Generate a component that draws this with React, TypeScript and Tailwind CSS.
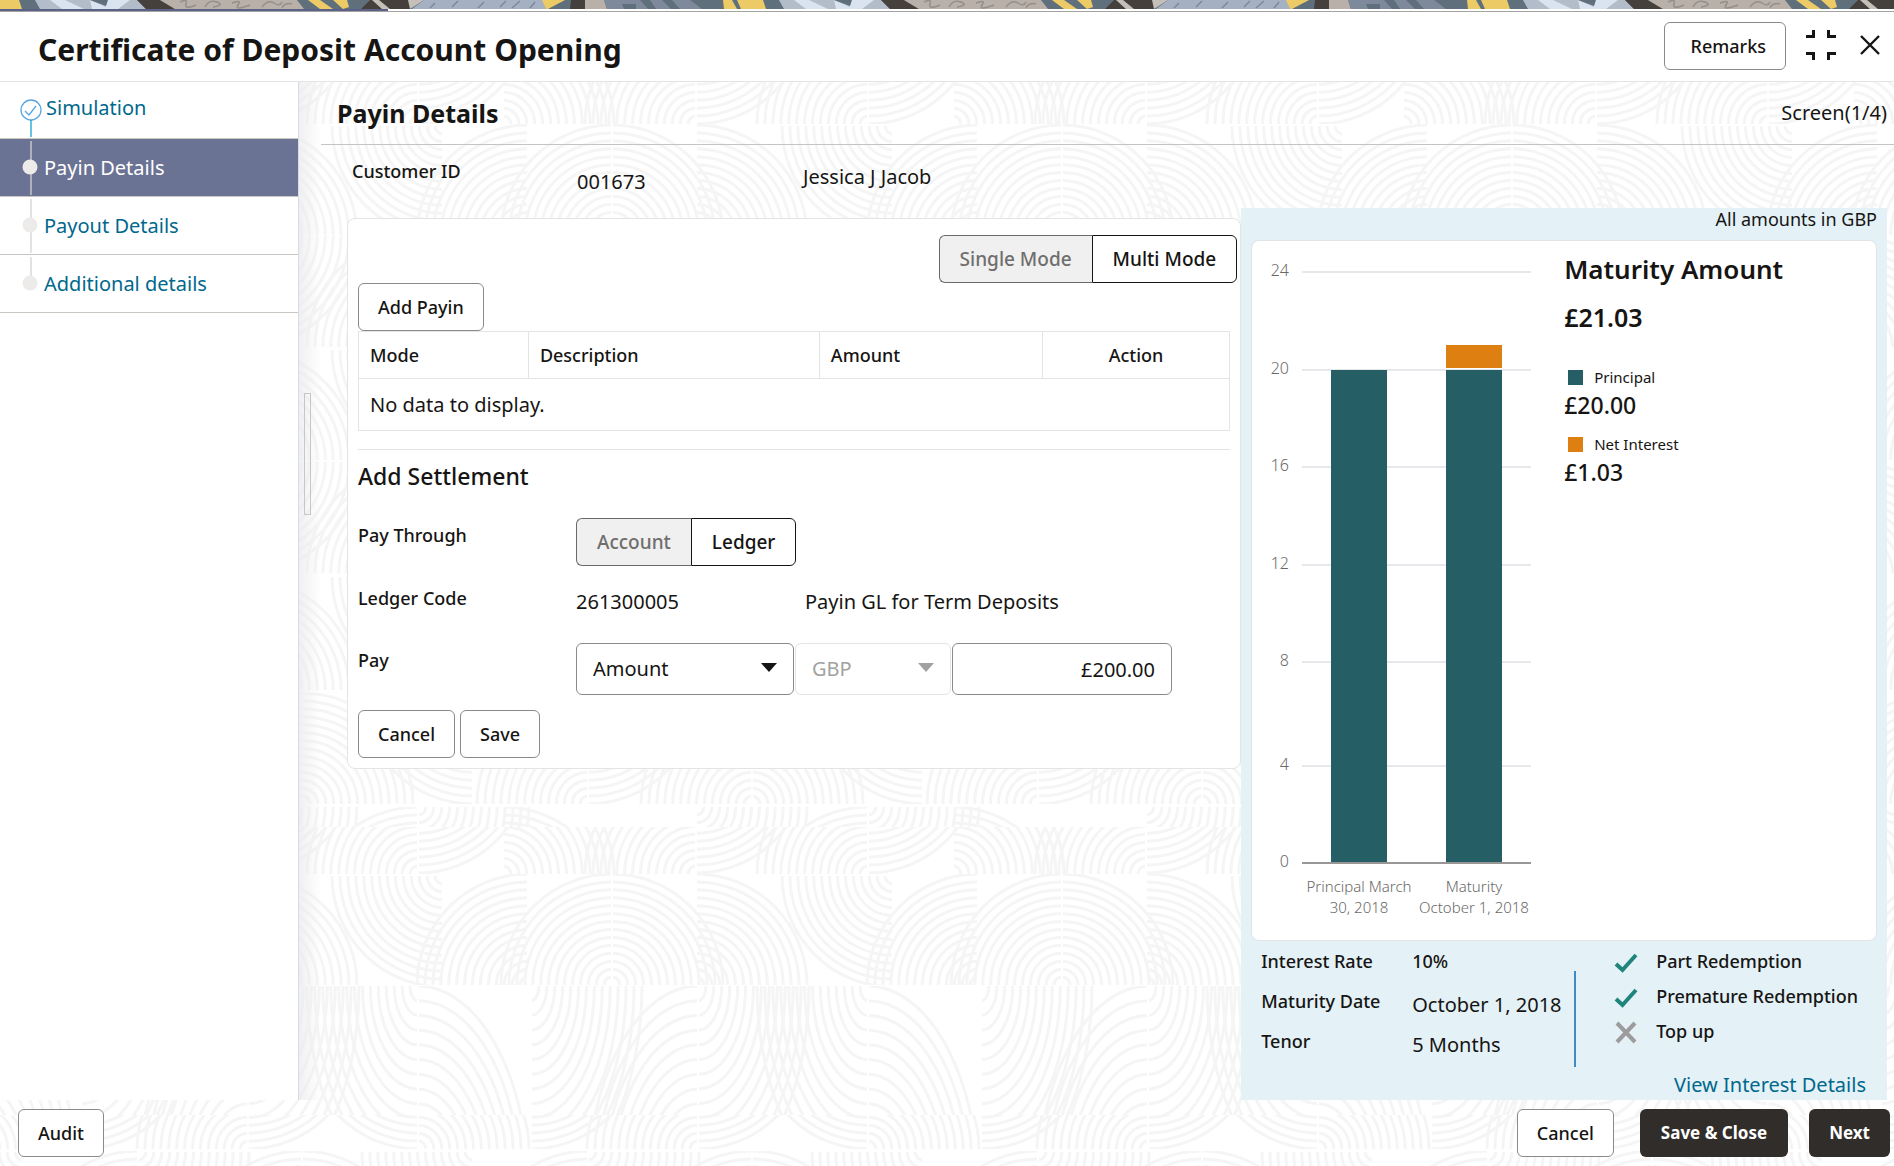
import { useState } from 'react'
import type { ReactNode } from 'react'
import { clsx } from 'clsx'

type Fan = { cx: number; side: 1 | -1; dir: 'up' | 'down' }
type Band = { top: number; bottom: number; base: number; hang: number; ry: number; fans: Fan[] }

const PERIOD = 450
const RADIUS = 111

const domes: Fan[] = [
  { cx: 612, side: 1, dir: 'up' },
  { cx: 612, side: -1, dir: 'up' },
  { cx: 696, side: 1, dir: 'up' },
  { cx: 528, side: -1, dir: 'up' },
  { cx: 443, side: -1, dir: 'down' },
]

const waves: Fan[] = [
  { cx: 418, side: -1, dir: 'up' },
  { cx: 418, side: 1, dir: 'down' },
  { cx: 503, side: 1, dir: 'up' },
  { cx: 696, side: -1, dir: 'up' },
  { cx: 696, side: 1, dir: 'down' },
]

const rings: Fan[] = [
  { cx: 302, side: 1, dir: 'up' },
  { cx: 302, side: -1, dir: 'up' },
  { cx: 473, side: -1, dir: 'down' },
  { cx: 588, side: -1, dir: 'up' },
  { cx: 588, side: 1, dir: 'down' },
]

const bands: Band[] = [
  { top: 70, bottom: 124, base: 124, hang: 13, ry: 111, fans: waves },
  { top: 124, bottom: 235, base: 236, hang: 126, ry: 111, fans: domes },
  { top: 236, bottom: 347, base: 347, hang: 236, ry: 111, fans: waves },
  { top: 350, bottom: 460, base: 460, hang: 350, ry: 111, fans: domes },
  { top: 462, bottom: 573, base: 573, hang: 462, ry: 111, fans: waves },
  { top: 575, bottom: 690, base: 690, hang: 577, ry: 111, fans: domes },
  { top: 693, bottom: 804, base: 804, hang: 693, ry: 111, fans: rings },
  { top: 807, bottom: 827, base: 918, hang: 807, ry: 111, fans: [
    { cx: 418, side: -1, dir: 'up' },
    { cx: 418, side: 1, dir: 'down' },
    { cx: 503, side: 1, dir: 'up' },
    { cx: 696, side: 1, dir: 'down' },
  ] },
  { top: 827, bottom: 874, base: 874, hang: 762, ry: 111, fans: waves },
  { top: 874, bottom: 985, base: 985, hang: 876, ry: 111, fans: domes },
  { top: 986, bottom: 1115, base: 1192, hang: 986, ry: 206, fans: [
    { cx: 418, side: -1, dir: 'down' },
    { cx: 418, side: 1, dir: 'up' },
    { cx: 531, side: 1, dir: 'down' },
    { cx: 698, side: -1, dir: 'up' },
    { cx: 698, side: 1, dir: 'down' },
  ] },
  { top: 1115, bottom: 1149, base: 1149, hang: 1038, ry: 111, fans: [
    { cx: 418, side: -1, dir: 'down' },
    { cx: 418, side: 1, dir: 'up' },
    { cx: 531, side: 1, dir: 'down' },
    { cx: 698, side: -1, dir: 'up' },
    { cx: 698, side: 1, dir: 'down' },
  ] },
  { top: 1151, bottom: 1262, base: 1262, hang: 1152, ry: 111, fans: rings },
]

function fanPath(fan: Fan, band: Band, shift: number) {
  const cx = fan.cx + shift - PERIOD
  const up = fan.dir === 'up'
  const cy = up ? band.base : band.hang
  const sweep = up === (fan.side === -1) ? 1 : 0
  let d = ''
  for (let i = 1; i <= 14; i++) {
    const rx = (RADIUS * i) / 14
    const ry = (band.ry * i) / 14
    d += `M${cx + fan.side * rx} ${cy}A${rx} ${ry} 0 0 ${sweep} ${cx + fan.side} ${up ? cy - ry : cy + ry}`
  }
  return d
}

function Backdrop() {
  return (
    <svg className="absolute inset-0 -z-10 h-full w-full" aria-hidden="true">
      {bands.map((band) => (
        <svg key={band.top} x="0" y={band.top} width="100%" height={band.bottom - band.top} overflow="hidden">
          <g transform={`translate(0 ${-band.top})`} fill="none" stroke="#f5f5f5" strokeWidth="3">
            {[0, 1, 2, 3, 4].map((k) =>
              band.fans.map((fan, i) => <path key={`${k}-${i}`} d={fanPath(fan, band, k * PERIOD)} />)
            )}
          </g>
        </svg>
      ))}
    </svg>
  )
}

function ArtStrip() {
  return (
    <svg className="block h-[9px] w-full" aria-hidden="true">
      <defs>
        <pattern id="strip" width="744" height="9" patternUnits="userSpaceOnUse">
          <rect width="744" height="9" fill="#5f707c" />
          <path d="M0 0H19L22 9H0z" fill="#eccb66" />
          <path d="M35 0H137L146 9H40z" fill="#b3bdc9" />
          <path d="M50 0H65L84 9H62zM90 0L106 7 104 0H130L118 9H92z" fill="#dae3f0" />
          <path d="M90 0H108L106 6z" fill="#5f707c" />
          <path d="M137 0H160L175 9H146z" fill="#45403c" />
          <path d="M160 0H297L304 9H175z" fill="#b9b0a9" />
          <path d="M180 2q8-4 6 2t10 1M205 7q4-8 12-5t-4 5M232 3q10-4 6 2t12 0M262 7q6-8 12-4t8-1M282 8q3-6 10-4" stroke="#958e89" strokeWidth="1.5" fill="none" />
          <path d="M308 0H320L333 9H320zM333 0H347L349 7 343 9z" fill="#eccb66" />
          <path d="M370 0H420L410 9H361z" fill="#45403c" />
          <path d="M372 0H379L390 9H382zM408 0H424L410 9z" fill="#c5bfba" />
          <path d="M424 0H543L546 9H412z" fill="#a5b1c2" />
          <path d="M430 8l5-5M452 7l6-6M478 8l6-6M500 7l6-6M512 8l8-7M530 8l5-6" stroke="#7d8899" strokeWidth="1.5" />
          <path d="M542 0H565L548 9H546z" fill="#eccb66" />
          <path d="M571 0H585V9H570z" fill="#45403c" />
          <path d="M585 0H604L607 9H585z" fill="#b9b0a9" />
          <path d="M604 0H690L702 9H607z" fill="#7e899b" />
          <path d="M622 4h14v5h-12zM640 0h10l6 9h-8zM662 0h10l8 9h-9z" fill="#5f707c" />
          <path d="M723 0H732L737 9H724zM737 0H744V9H741z" fill="#eccb66" />
        </pattern>
      </defs>
      <rect width="100%" height="9" fill="url(#strip)" />
    </svg>
  )
}

function OutlineButton({ children, className }: { children: ReactNode; className?: string }) {
  return (
    <button
      type="button"
      className={clsx('h-12 rounded-md border border-[#8b8a89] bg-white px-[19px] text-lg leading-6 font-medium', className)}
    >
      {children}
    </button>
  )
}

interface ToggleProps {
  label: string
  options: string[]
  value: string
  onChange: (value: string) => void
}

function Toggle({ label, options, value, onChange }: ToggleProps) {
  return (
    <div role="group" aria-label={label} className="flex">
      {options.map((option) => (
        <button
          key={option}
          type="button"
          aria-pressed={option === value}
          onClick={() => onChange(option)}
          className={clsx(
            'h-12 border px-5 text-[19px] leading-6 font-medium first:rounded-l-md first:border-r-0 last:rounded-r-md',
            option === value
              ? 'border-[#161513] bg-white text-[#161513]'
              : 'border-[#6b6a69] bg-[#f0f0f0] text-[#6f6e6d]'
          )}
        >
          {option}
        </button>
      ))}
    </div>
  )
}

const steps = [
  { name: 'Simulation', state: 'done' },
  { name: 'Payin Details', state: 'current' },
  { name: 'Payout Details', state: 'next' },
  { name: 'Additional details', state: 'next' },
]

function StepList() {
  return (
    <nav className="w-[299px] shrink-0 border-r border-[#d5dde3] bg-white" aria-label="Steps">
      <ol>
        {steps.map((step, index) => (
          <li
            key={step.name}
            className={clsx('border-b border-[#c9c6c1]', step.state === 'current' ? 'bg-[#6b7394]' : 'bg-white')}
          >
            <a
              href={`#step-${index + 1}`}
              className={clsx(
                'flex items-center gap-1 pl-5 text-xl leading-6',
                step.state === 'done' ? 'h-14' : 'h-[57px]',
                step.state === 'current' ? 'text-white' : 'text-[#00688c]'
              )}
            >
              {step.state === 'done' ? (
                <svg className="h-full w-[22px]" viewBox="0 0 22 56" fill="none" aria-hidden="true">
                  <circle cx="11" cy="28" r="10" stroke="#5aa5e0" strokeWidth="1.3" />
                  <path d="M5 29l4 4 7-9" stroke="#5aa5e0" strokeWidth="1.3" />
                  <path d="M11 38v17" stroke="#13a5cf" strokeWidth="1.3" />
                </svg>
              ) : (
                <svg className="h-full w-[20px]" viewBox="0 0 20 57" fill="none" aria-hidden="true">
                  <path d={index === steps.length - 1 ? 'M11 2v20' : 'M11 2v54'} stroke="#d4d3d2" strokeWidth="1.3" />
                  <circle cx="10" cy="28" r="7.5" fill="#ecebea" />
                </svg>
              )}
              <span className={step.state === 'done' ? 'pb-1' : ''}>{step.name}</span>
            </a>
          </li>
        ))}
      </ol>
    </nav>
  )
}

const ticks = [
  { value: 24, y: 31 },
  { value: 20, y: 129 },
  { value: 16, y: 226 },
  { value: 12, y: 324 },
  { value: 8, y: 421 },
  { value: 4, y: 525 },
  { value: 0, y: 622 },
]

function MaturityChart() {
  return (
    <svg width="284" height="698" className="shrink-0" role="img" aria-label="Principal and maturity amounts">
      <g stroke="#e6e8eb" strokeWidth="2">
        {ticks.map((tick) => (
          <path key={tick.value} d={`M50 ${tick.y}H279`} />
        ))}
      </g>
      <rect x="79" y="129" width="56" height="493" fill="#265e66" />
      <rect x="194" y="129" width="56" height="493" fill="#265e66" />
      <rect x="194" y="104" width="56" height="23" fill="#dd7f11" />
      <path d="M50 622H279" stroke="#989796" strokeWidth="2" />
      <g fontSize="16" fontWeight="300" fill="#6a6968" textAnchor="end">
        {ticks.map((tick) => (
          <text key={tick.value} x="37" y={tick.y + 4}>{tick.value}</text>
        ))}
      </g>
      <g fontSize="15" fontWeight="300" fill="#6a6968" textAnchor="middle">
        <text x="107" y="651">Principal March</text>
        <text x="107" y="672">30, 2018</text>
        <text x="222" y="651">Maturity</text>
        <text x="222" y="672">October 1, 2018</text>
      </g>
    </svg>
  )
}

function LegendItem({ name, amount, swatch }: { name: string; amount: string; swatch: string }) {
  return (
    <div>
      <dt className="flex items-center gap-[11px] pl-1 text-[15px] leading-6">
        <span className={clsx('size-[15px]', swatch)} />
        {name}
      </dt>
      <dd className="text-[23px] leading-8 font-medium">{amount}</dd>
    </div>
  )
}

const features = [
  { name: 'Part Redemption', allowed: true },
  { name: 'Premature Redemption', allowed: true },
  { name: 'Top up', allowed: false },
]

function SimulationPanel() {
  return (
    <section className="flex flex-col bg-[#e4f1f7] px-[10px]" aria-label="Simulation result">
      <p className="h-8 text-right text-lg leading-[22px]">All amounts in GBP</p>
      <div className="flex h-[701px] gap-[28px] rounded-lg border border-[#e0e4e6] bg-white">
        <MaturityChart />
        <div>
          <h2 className="mt-3 text-[26px] leading-8 font-semibold">Maturity Amount</h2>
          <p className="mt-4 text-[25px] leading-8 font-semibold">£21.03</p>
          <dl className="mt-8 flex flex-col gap-[11px]">
            <LegendItem name="Principal" amount="£20.00" swatch="bg-[#265e66]" />
            <LegendItem name="Net Interest" amount="£1.03" swatch="bg-[#dd7f11]" />
          </dl>
        </div>
      </div>
      <div className="flex pl-[10px]">
        <dl className="grid h-[126px] w-[313px] grid-cols-[151px_1fr] grid-rows-[40px_40px_40px] pt-[6px] text-lg leading-7 font-medium">
          <dt>Interest Rate</dt>
          <dd>10%</dd>
          <dt>Maturity Date</dt>
          <dd className="pt-1 text-xl leading-7 font-normal">October 1, 2018</dd>
          <dt>Tenor</dt>
          <dd className="pt-1 text-xl leading-7 font-normal">5 Months</dd>
        </dl>
        <div className="mt-[30px] h-24 w-[2px] bg-[#3f8cc5]" />
        <ul className="flex flex-col pt-[6px] pl-[38px] text-lg leading-7 font-medium">
          {features.map((feature) => (
            <li key={feature.name} className="flex h-[35px] items-start gap-[18px]">
              {feature.allowed ? (
                <svg className="mt-1 h-6 w-6" viewBox="0 0 24 24" fill="none" aria-hidden="true">
                  <path d="M2 13l6.500 6L22 4" stroke="#1f857c" strokeWidth="4" />
                </svg>
              ) : (
                <svg className="mt-1 h-6 w-6" viewBox="0 0 24 24" fill="none" aria-hidden="true">
                  <path d="M3 2l18 19M21 2L3 21" stroke="#9c9c9c" strokeWidth="4" />
                </svg>
              )}
              {feature.name}
            </li>
          ))}
        </ul>
      </div>
      <a href="#interest-details" className="mt-1 mb-[1px] self-end pr-[11px] text-xl leading-7 text-[#00688c]">
        View Interest Details
      </a>
    </section>
  )
}

function PayinCard() {
  const [mode, setMode] = useState('Multi Mode')
  const [through, setThrough] = useState('Ledger')

  return (
    <section className="rounded-lg border border-[#e4e4e4] bg-white px-[10px] pt-4 pb-[10px]">
      <div className="-mr-[7px] flex justify-end">
        <Toggle label="Payin mode" options={['Single Mode', 'Multi Mode']} value={mode} onChange={setMode} />
      </div>
      <OutlineButton>Add Payin</OutlineButton>
      <table className="w-full table-fixed border-collapse text-left">
        <thead>
          <tr className="h-[47px] text-lg">
            <th className="w-[19.5%] border border-[#e4e4e4] px-[11px] font-medium">Mode</th>
            <th className="w-[33.4%] border border-[#e4e4e4] px-[11px] font-medium">Description</th>
            <th className="w-[25.6%] border border-[#e4e4e4] px-[11px] font-medium">Amount</th>
            <th className="border border-[#e4e4e4] px-[11px] text-center font-medium">Action</th>
          </tr>
        </thead>
        <tbody>
          <tr className="h-[52px] text-xl">
            <td colSpan={4} className="border border-[#e4e4e4] px-[11px]">No data to display.</td>
          </tr>
        </tbody>
      </table>
      <hr className="mt-[18px] border-[#e4e4e4]" />
      <h3 className="mt-[10px] text-[23px] leading-8 font-medium">Add Settlement</h3>

      <div className="mt-[26px] grid grid-cols-[218px_1fr] text-lg leading-6">
        <span className="pt-[5px] font-medium">Pay Through</span>
        <Toggle label="Pay through" options={['Account', 'Ledger']} value={through} onChange={setThrough} />

        <span className="mt-5 font-medium">Ledger Code</span>
        <div className="mt-5 flex pt-1 text-xl leading-6">
          <span className="w-[229px]">261300005</span>
          <span>Payin GL for Term Deposits</span>
        </div>

        <label htmlFor="pay-by" className="mt-[29px] pt-[5px] font-medium">Pay</label>
        <div className="mt-[29px] flex gap-[1px] text-xl leading-6">
          <div className="relative w-[218px]">
            <select id="pay-by" className="h-[52px] w-full appearance-none rounded-md border border-[#8b8a89] bg-white px-4">
              <option>Amount</option>
              <option>Percentage</option>
            </select>
            <svg className="pointer-events-none absolute top-5 right-[17px]" width="16" height="9" aria-hidden="true">
              <path d="M0 0h16L8 9z" fill="#161513" />
            </svg>
          </div>
          <div className="relative w-[156px]">
            <select aria-label="Currency" disabled className="h-[52px] w-full appearance-none rounded-md border border-[#e4e4e4] bg-white px-4 text-[#a2a1a0] opacity-100">
              <option>GBP</option>
            </select>
            <svg className="pointer-events-none absolute top-5 right-[17px]" width="16" height="9" aria-hidden="true">
              <path d="M0 0h16L8 9z" fill="#a2a1a0" />
            </svg>
          </div>
          <input
            aria-label="Pay amount"
            defaultValue="£200.00"
            className="h-[52px] w-[220px] rounded-md border border-[#8b8a89] bg-white px-4 text-right"
          />
        </div>
      </div>

      <div className="mt-[15px] flex gap-[5px]">
        <OutlineButton>Cancel</OutlineButton>
        <OutlineButton>Save</OutlineButton>
      </div>
    </section>
  )
}

export default function App() {
  return (
    <div className="relative isolate flex min-h-screen flex-col overflow-hidden bg-white font-['Noto_Sans','Open_Sans',sans-serif] text-[#161513]">
      <Backdrop />
      <ArtStrip />
      <div className="flex h-[2px] bg-white">
        <div className="w-[388px] bg-[#5b6187]" />
      </div>
      <header className="flex h-[71px] items-center gap-5 border-t border-b border-t-[#a3a3a3] border-b-[#e4e4e4] bg-white pr-[14px] pl-[38px]">
        <h1 className="flex-1 pt-[6px] text-[30px] leading-10 font-bold">Certificate of Deposit Account Opening</h1>
        <OutlineButton className="mb-[2px] pl-[26px]">Remarks</OutlineButton>
        <button type="button" aria-label="Restore size" className="mb-1">
          <svg width="30" height="30" viewBox="0 0 30 30" fill="none" stroke="#161513" strokeWidth="3" aria-hidden="true">
            <path d="M0 6.500H7.500V0M22.500 0V6.500H30M0 23.500H7.500V30M22.500 30V23.500H30" />
          </svg>
        </button>
        <button type="button" aria-label="Close" className="mb-1 ml-1">
          <svg width="20" height="20" viewBox="0 0 20 20" fill="none" stroke="#161513" strokeWidth="2.400" aria-hidden="true">
            <path d="M1 1L19 19M19 1L1 19" />
          </svg>
        </button>
      </header>

      <div className="flex flex-1">
        <StepList />
        <div className="flex w-[22px] items-start bg-linear-to-r from-[#e9eaec]/70 to-transparent pl-[5px]">
          <div className="mt-[311px] h-[122px] w-[7px] border border-[#c8c7c6]" />
        </div>
        <main className="min-w-0 flex-1">
          <div className="flex h-[63px] items-center border-b border-[#c4c4c4] pr-[7px] pl-4">
            <h2 className="flex-1 text-[25px] leading-8 font-bold">Payin Details</h2>
            <span className="text-xl leading-6">Screen(1/4)</span>
          </div>
          <dl className="flex h-[63px] items-start pt-[14px] pl-[31px]">
            <dt className="w-[225px] text-lg leading-6 font-medium">Customer ID</dt>
            <dd className="w-[226px] pt-[9px] text-xl leading-7">001673</dd>
            <dd className="pt-[6px] text-xl leading-6">Jessica J Jacob</dd>
          </dl>
          <div className="grid grid-cols-[18fr_13fr] pr-[7px] pl-[26px]">
            <div className="pt-[10px]">
              <PayinCard />
            </div>
            <SimulationPanel />
          </div>
        </main>
      </div>

      <footer className="flex h-[66px] items-start pt-[9px] pr-1 pl-[18px]">
        <OutlineButton>Audit</OutlineButton>
        <div className="ml-auto flex">
          <OutlineButton className="mr-[26px]">Cancel</OutlineButton>
          <button type="button" className="mr-[21px] h-12 rounded-md bg-[#312d2a] px-[21px] text-[17px] leading-6 font-bold text-white">
            Save &amp; Close
          </button>
          <button type="button" className="h-12 rounded-md bg-[#312d2a] px-5 text-[17px] leading-6 font-bold text-white">
            Next
          </button>
        </div>
      </footer>
    </div>
  )
}
